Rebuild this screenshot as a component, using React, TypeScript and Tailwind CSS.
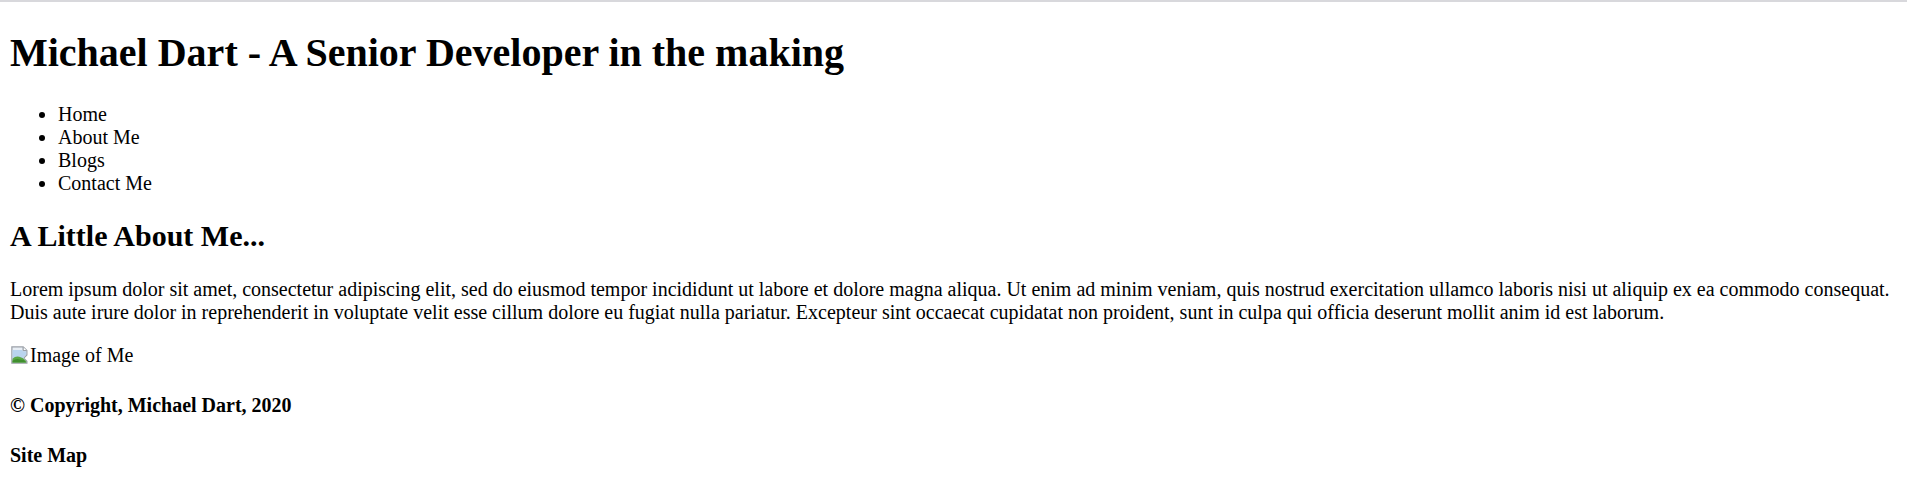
import React from "react";

function BrokenImg() {
  return (
    <svg width="20" height="20" viewBox="0 0 16 16" className="inline-block align-[-3px]">
      <path d="M1.5 1.5 H10.5 L13.5 4.5 V8 L11 10.5 L13.5 13 V14.5 H1.5 Z" fill="#e8eef5" stroke="#9aa0a8" strokeWidth="1" />
      <path d="M10.5 1.5 V4.5 H13.5" fill="#fff" stroke="#9aa0a8" strokeWidth="1" />
      <path d="M2 4 H10 V5 H13 V7.5 L10.5 10 L12 11.5 H2 Z" fill="#b9d4ee" />
      <path d="M2 14 V11 Q5 8 9 10 L10.5 10.5 L13 13 V14 Z" fill="#5ba845" />
      <path d="M2 14 V12.5 Q5 10.5 8 11.5 L11 12 L13 14 Z" fill="#3f8f2e" />
    </svg>
  );
}

export default function App() {
  return (
    <div className="font-['Liberation_Serif',serif] text-black leading-[normal] bg-white min-h-[501px]">
      <div className="h-[2px] bg-[#d8d8dc]" />
      <div className="px-[10px] pt-[1px] pb-[10px]">
        <h1 className="text-[40px] font-bold mt-[25.8px] mb-[26.8px]">Michael Dart - A Senior Developer in the making</h1>
        <ul className="list-disc pl-[48px] text-[20px] mt-[20px] mb-[20px]">
          <li>Home</li>
          <li>About Me</li>
          <li>Blogs</li>
          <li>Contact Me</li>
        </ul>
        <h2 className="text-[30px] font-bold mt-[24.9px] mb-[24.9px]">A Little About Me...</h2>
        <p className="text-[20px] my-[20px]">
          Lorem ipsum dolor sit amet, consectetur adipiscing elit, sed do eiusmod tempor incididunt ut labore et dolore magna aliqua. Ut enim ad minim veniam, quis nostrud exercitation ullamco laboris nisi ut aliquip ex ea commodo consequat. Duis aute irure dolor in reprehenderit in voluptate velit esse cillum dolore eu fugiat nulla pariatur. Excepteur sint occaecat cupidatat non proident, sunt in culpa qui officia deserunt mollit anim id est laborum.
        </p>
        <p className="text-[20px] my-[20px]">
          <span className="inline-block"><BrokenImg />Image of Me</span>
        </p>
        <h4 className="text-[20px] font-bold my-[26.6px]">© Copyright, Michael Dart, 2020</h4>
        <h4 className="text-[20px] font-bold my-[26.6px]">Site Map</h4>
      </div>
    </div>
  );
}
